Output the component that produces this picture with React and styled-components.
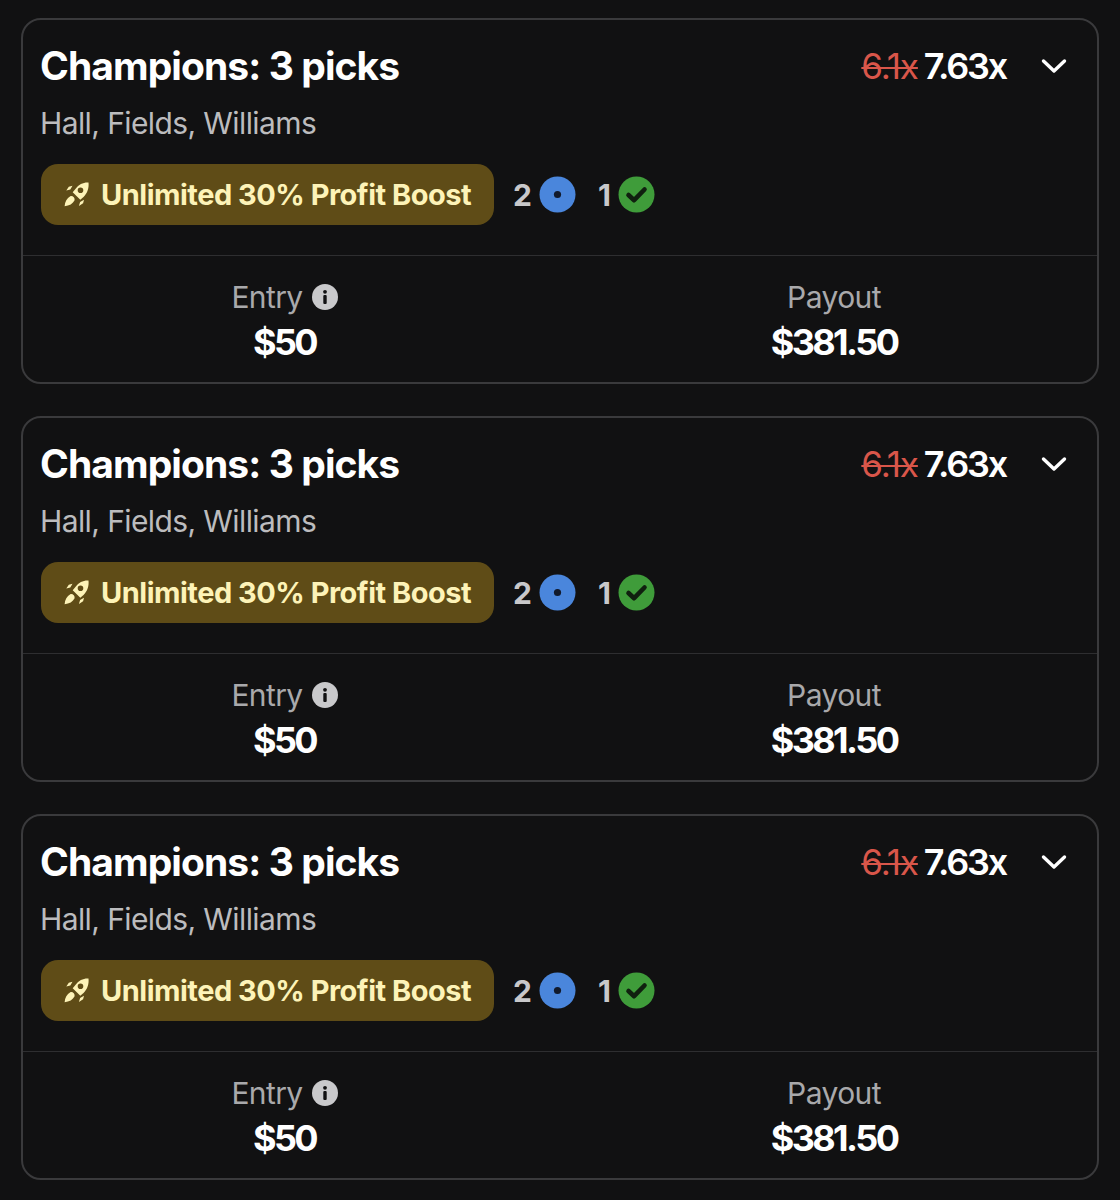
import React from "react";
import styled, { createGlobalStyle } from "styled-components";

const GlobalStyle = createGlobalStyle`
  html, body {
    margin: 0;
    padding: 0;
    background: #111112;
  }
`;

const Page = styled.div`
  display: flex;
  flex-direction: column;
  gap: 32px;
  width: 1120px;
  height: 1200px;
  box-sizing: border-box;
  padding: 18px 21px 0;
  background: #111112;
  font-family: Inter, "Liberation Sans", sans-serif;
  overflow: hidden;
`;

const Card = styled.div`
  box-sizing: border-box;
  height: 366px;
  border: 2px solid #3a3a3c;
  border-radius: 20px;
  display: flex;
  flex-direction: column;
`;

const Top = styled.div`
  height: 236px;
  box-sizing: border-box;
  padding: 20px 18px 0;
  border-bottom: 1px solid #2e2e30;
`;

const TitleRow = styled.div`
  display: flex;
  align-items: center;
  justify-content: space-between;
  height: 50px;
`;

const Title = styled.div`
  font-size: 39px;
  font-weight: 700;
  letter-spacing: -0.92px;
  margin-left: -1px;
  color: #fff;
`;

const Multipliers = styled.div`
  display: flex;
  align-items: center;
  margin-top: 2px;
  margin-right: 11px;
`;

const OldValue = styled.span`
  font-size: 35px;
  font-weight: 400;
  letter-spacing: -1.1px;
  color: #d9564a;
  text-decoration: line-through;
  text-decoration-thickness: 2px;
  margin-right: 6px;
`;

const NewValue = styled.span`
  font-size: 36px;
  font-weight: 600;
  letter-spacing: -2.2px;
  color: #fff;
`;

const Chevron = styled.svg`
  width: 28px;
  height: 28px;
  margin-left: 34px;
  fill: none;
  stroke: #fff;
  stroke-width: 3.4;
  stroke-linecap: round;
  stroke-linejoin: round;
`;

const Players = styled.div`
  margin-top: 15px;
  margin-left: -1px;
  font-size: 30px;
  line-height: 36px;
  letter-spacing: -0.6px;
  color: #bcbcbe;
`;

const BadgeRow = styled.div`
  display: flex;
  align-items: center;
  margin-top: 23px;
`;

const Boost = styled.div`
  display: flex;
  align-items: center;
  box-sizing: border-box;
  width: 453px;
  height: 61px;
  padding-left: 22px;
  border-radius: 17px;
  background: #5f4c17;
  color: #fdf3b8;
  font-size: 29px;
  font-weight: 700;
  letter-spacing: -0.5px;
  white-space: nowrap;
`;

const Rocket = styled.svg`
  width: 27px;
  height: 27px;
  margin-right: 11px;
  flex-shrink: 0;
  fill: #fdf3b8;
`;

const Count = styled.span`
  font-size: 30px;
  font-weight: 700;
  color: #c8c8ca;
  margin-left: ${(p) => p.$gap}px;
  margin-right: ${(p) => p.$after}px;
`;

const StatusIcon = styled.svg`
  width: 37px;
  height: 37px;
  flex-shrink: 0;
`;

const Bottom = styled.div`
  display: grid;
  grid-template-columns: 523px 1fr;
  column-gap: 25px;
  flex: 1;
  padding-top: 23px;
  box-sizing: border-box;
`;

const Stat = styled.div`
  display: flex;
  flex-direction: column;
  align-items: center;
`;

const Label = styled.div`
  display: flex;
  align-items: center;
  gap: 9px;
  font-size: 30px;
  line-height: 36px;
  letter-spacing: -0.6px;
  color: #a9a9ab;
`;

const Info = styled.svg`
  width: 26px;
  height: 26px;
`;

const Amount = styled.div`
  margin-top: 5px;
  font-size: 36px;
  line-height: 44px;
  font-weight: 700;
  letter-spacing: -2.6px;
  color: #fff;
`;

const RocketIcon = () => (
  <Rocket viewBox="0 0 27 27">
    <path d="M25.500 1.500c.6 5.600-1 10.600-5 14.400l-3.200 2.800-7.600-7.400 2.700-3.300C16.100 3.200 20.200 1.200 25.500 1.500zM17.500 6.500a2.800 2.800 0 1 0 0 5.600 2.800 2.800 0 0 0 0-5.600z" fillRule="evenodd" />
    <path d="M9.500 4.700l-2.200 3.900-4 .9 2.500-3.700zM21 18.800l-.9 3.400-4.200 2.700 1.200-3.800z" />
    <path d="M7.300 15.200c2.500-.6 4.700 1.500 4.300 4-1.700 3.500-5.300 5.500-10 6 .4-4.500 2.300-8 5.700-10z" />
  </Rocket>
);

const PendingIcon = () => (
  <StatusIcon viewBox="0 0 37 37">
    <circle cx="18.500" cy="18.500" r="18" fill="#4a86dc" />
    <circle cx="18.500" cy="18.500" r="3.600" fill="#111a2c" />
  </StatusIcon>
);

const CheckIcon = () => (
  <StatusIcon viewBox="0 0 37 37">
    <circle cx="18.500" cy="18.500" r="18" fill="#3f9c3a" />
    <path d="M10.500 19l5.600 5.200L26.500 13.500" fill="none" stroke="#10200f" strokeWidth="4.600" strokeLinecap="round" strokeLinejoin="round" />
  </StatusIcon>
);

const InfoIcon = () => (
  <Info viewBox="0 0 26 26">
    <circle cx="13" cy="13" r="13" fill="#c9c9cb" />
    <circle cx="13" cy="7.800" r="1.900" fill="#111112" />
    <rect x="11.300" y="11" width="3.400" height="9" rx="1" fill="#111112" />
  </Info>
);

const EntryCard = () => (
  <Card>
    <Top>
      <TitleRow>
        <Title>Champions: 3 picks</Title>
        <Multipliers>
          <OldValue>6.1x</OldValue>
          <NewValue>7.63x</NewValue>
          <Chevron viewBox="0 0 28 28">
            <path d="M3.500 9l10.500 10L24.500 9" />
          </Chevron>
        </Multipliers>
      </TitleRow>
      <Players>Hall, Fields, Williams</Players>
      <BadgeRow>
        <Boost>
          <RocketIcon />
          Unlimited 30% Profit Boost
        </Boost>
        <Count $gap={19} $after={7}>2</Count>
        <PendingIcon />
        <Count $gap={22} $after={7}>1</Count>
        <CheckIcon />
      </BadgeRow>
    </Top>
    <Bottom>
      <Stat>
        <Label>
          Entry
          <InfoIcon />
        </Label>
        <Amount>$50</Amount>
      </Stat>
      <Stat>
        <Label>Payout</Label>
        <Amount>$381.50</Amount>
      </Stat>
    </Bottom>
  </Card>
);

export default function App() {
  return (
    <>
      <GlobalStyle />
      <Page>
        {[0, 1, 2].map((i) => (
          <EntryCard key={i} />
        ))}
      </Page>
    </>
  );
}
